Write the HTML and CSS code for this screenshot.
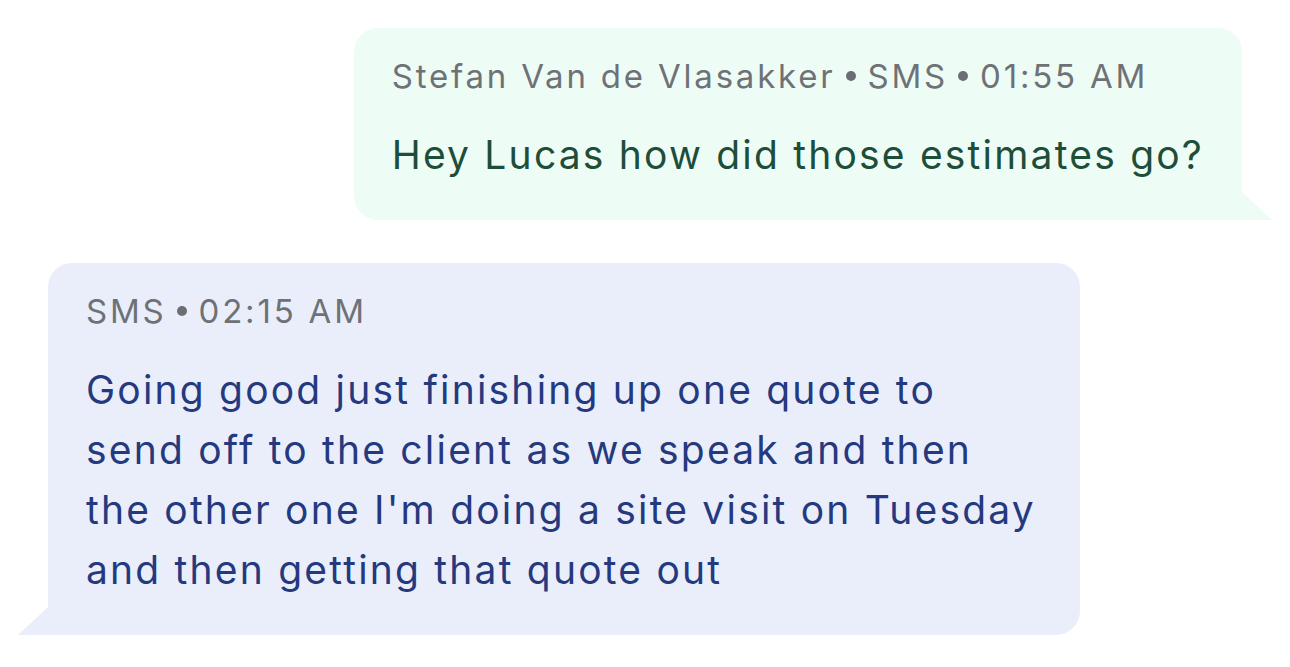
FILE: index.html
```html
<!DOCTYPE html>
<html lang="en">
<head>
<meta charset="utf-8">
<title>Messages</title>
<link rel="stylesheet" href="styles.css">
</head>
<body>
<div class="thread">
  <div class="row row-out">
    <div class="bubble bubble-out">
      <div class="meta"><span>Stefan Van de Vlasakker</span><span class="dot"></span><span>SMS</span><span class="dot"></span><span>01:55 AM</span></div>
      <div class="text">Hey Lucas how did those estimates go?</div>
    </div>
  </div>
  <div class="row row-in">
    <div class="bubble bubble-in">
      <div class="meta"><span>SMS</span><span class="dot"></span><span>02:15 AM</span></div>
      <div class="text">Going good just finishing up one quote to send off to the client as we speak and then the other one I'm doing a site visit on Tuesday and then getting that quote out</div>
    </div>
  </div>
</div>
</body>
</html>
```

FILE: styles.css
```css
* { box-sizing: border-box; }
html, body { margin: 0; padding: 0; background: #ffffff; }
body {
  font-family: Inter, "Noto Sans", "Liberation Sans", sans-serif;
  width: 1290px;
  height: 667px;
  overflow: hidden;
}
.thread {
  display: flex;
  flex-direction: column;
  gap: 43px;
  padding: 28px 48px 0 48px;
}
.row { display: flex; }
.row-out { justify-content: flex-end; }
.row-in { justify-content: flex-start; }
.bubble {
  position: relative;
  padding: 24px 38px 35px 38px;
  border-radius: 24px;
}
.bubble-out {
  background: #eefcf6;
  border-bottom-right-radius: 0;
}
.bubble-in {
  background: #eaeefb;
  border-bottom-left-radius: 0;
  max-width: 1032px;
}
.bubble::after {
  content: "";
  position: absolute;
  bottom: 0;
  width: 30px;
  height: 28px;
}
.bubble-out::after {
  right: -30px;
  background: #eefcf6;
  clip-path: polygon(0 0, 100% 100%, 0 100%);
}
.bubble-in::after {
  left: -30px;
  background: #eaeefb;
  clip-path: polygon(100% 0, 100% 100%, 0 100%);
}
.meta {
  display: flex;
  align-items: center;
  font-size: 33px;
  line-height: 48px;
  color: #6e7277;
  letter-spacing: 2.8px;
  margin-bottom: 25px;
  white-space: nowrap;
}
.dot {
  flex: none;
  width: 10px;
  height: 10px;
  border-radius: 50%;
  background: #6b6e73;
  margin: 0 12px 0 10px;
}
.text {
  font-size: 39px;
  line-height: 60px;
  letter-spacing: 2.2px;
}
.bubble-out .text { color: #1d4e39; }
.bubble-in .text { color: #25397f; }
```
